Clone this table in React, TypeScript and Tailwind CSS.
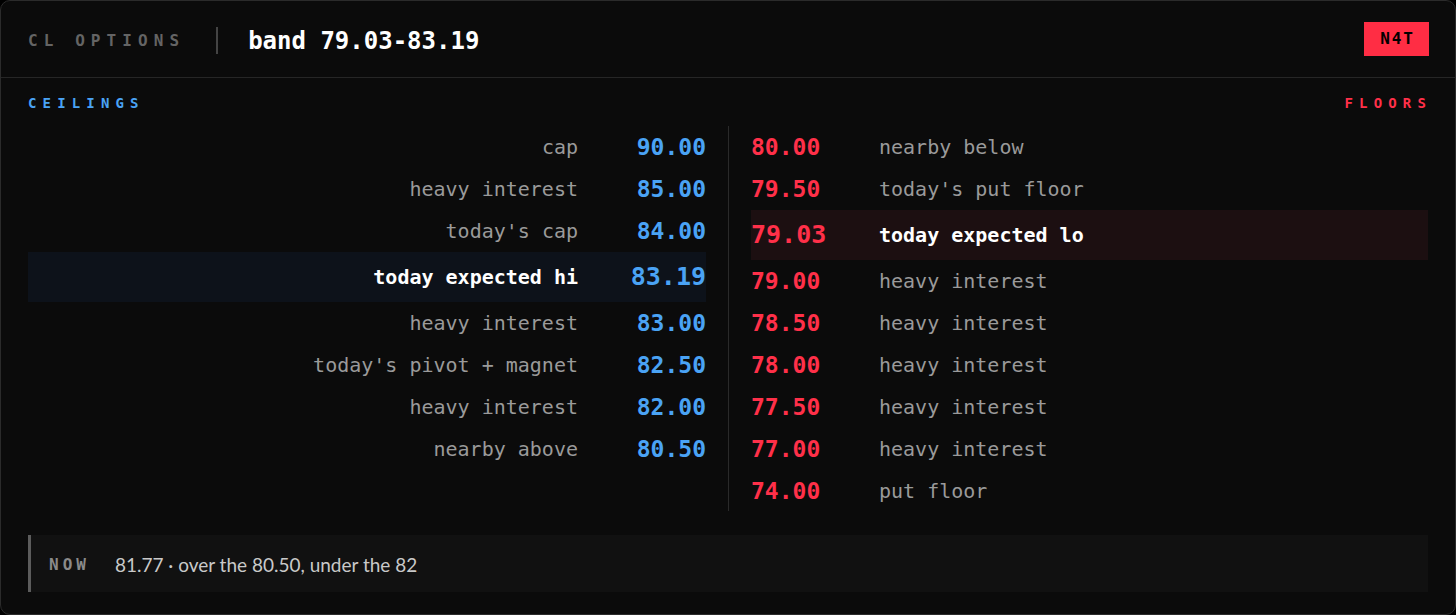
const mono = "font-['DejaVu_Sans_Mono',monospace]";

type Level = { price: string; label: string; hot?: boolean };

const ceilings: Level[] = [
  { price: "90.00", label: "cap" },
  { price: "85.00", label: "heavy interest" },
  { price: "84.00", label: "today's cap" },
  { price: "83.19", label: "today expected hi", hot: true },
  { price: "83.00", label: "heavy interest" },
  { price: "82.50", label: "today's pivot + magnet" },
  { price: "82.00", label: "heavy interest" },
  { price: "80.50", label: "nearby above" },
];

const floors: Level[] = [
  { price: "80.00", label: "nearby below" },
  { price: "79.50", label: "today's put floor" },
  { price: "79.03", label: "today expected lo", hot: true },
  { price: "79.00", label: "heavy interest" },
  { price: "78.50", label: "heavy interest" },
  { price: "78.00", label: "heavy interest" },
  { price: "77.50", label: "heavy interest" },
  { price: "77.00", label: "heavy interest" },
  { price: "74.00", label: "put floor" },
];

function CeilingRow({ l }: { l: Level }) {
  return (
    <div
      className={`flex items-center justify-end ${l.hot ? "h-[50px] bg-[#0d121a]" : "h-[42px]"}`}
    >
      <span
        className={`text-[20px] ${l.hot ? "font-bold text-white" : "text-[#9a9a9a]"}`}
      >
        {l.label}
      </span>
      <span
        className={`w-[128px] text-right font-bold text-[#4aa3f5] ${l.hot ? "text-[25px]" : "text-[23px]"}`}
      >
        {l.price}
      </span>
    </div>
  );
}

function FloorRow({ l }: { l: Level }) {
  return (
    <div className={`flex items-center ${l.hot ? "h-[50px] bg-[#1c0f11]" : "h-[42px]"}`}>
      <span
        className={`w-[128px] font-bold text-[#ff3049] ${l.hot ? "text-[25px]" : "text-[23px]"}`}
      >
        {l.price}
      </span>
      <span className={`text-[20px] ${l.hot ? "font-bold text-white" : "text-[#9a9a9a]"}`}>
        {l.label}
      </span>
    </div>
  );
}

export default function App() {
  return (
    <div className="h-[615px] w-[1456px] bg-black">
      <div className={`flex h-full flex-col rounded-[10px] border border-[#2b2b2b] bg-[#0b0b0b] ${mono}`}>
        <div className="flex h-[77px] shrink-0 items-center border-b border-[#262626] pl-[27px] pr-[26px]">
          <span className="pt-[4px] text-[16px] font-semibold tracking-[0.38em] text-[#646464]">CL OPTIONS</span>
          <span className="ml-[31px] mt-[2px] h-[27px] w-[2px] bg-[#444]" />
          <span className="ml-[30px] pt-[4px] text-[24px] font-bold text-white">band 79.03-83.19</span>
          <span className="ml-auto flex h-[34px] w-[65px] items-center justify-center bg-[#ff2d44] pl-[2px] text-[16px] font-bold tracking-[0.12em] text-black">
            N4T
          </span>
        </div>

        <div className="flex flex-1 flex-col px-[27px] pb-[22px]">
          <div className="mt-[17px] flex h-[16px] items-center justify-between text-[14px] font-bold tracking-[0.44em]">
            <span className="text-[#4aa3f5]">CEILINGS</span>
            <span className="-mr-[4px] text-[#ff3049]">FLOORS</span>
          </div>

          <div className="mt-[15px] grid grid-cols-[678px_1px_1fr] items-start gap-x-[22px]">
            <div className="flex flex-col">
              {ceilings.map((l) => (
                <CeilingRow key={l.price} l={l} />
              ))}
            </div>
            <div className="h-[385px] bg-[#2a2a2a]" />
            <div className="flex flex-col">
              {floors.map((l) => (
                <FloorRow key={l.price} l={l} />
              ))}
            </div>
          </div>

          <div className="mt-auto flex h-[57px] items-center border-l-[3px] border-[#5c5c5c] bg-[#111111] pl-[18px]">
            <span className="pt-[2px] text-[16px] font-bold tracking-[0.25em] text-[#8a8a8a]">NOW</span>
            <span className="ml-[25px] pt-[4px] font-['Lato',sans-serif] text-[19px] text-[#c9c9c9]">
              81.77 · over the 80.50, under the 82
            </span>
          </div>
        </div>
      </div>
    </div>
  );
}
